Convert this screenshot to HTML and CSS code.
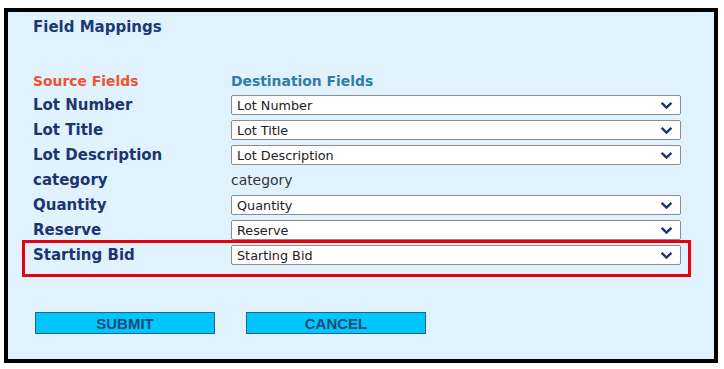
FILE: index.html
```html
<!DOCTYPE html>
<html lang="en">
<head>
  <meta charset="UTF-8">
  <meta name="viewport" content="width=device-width, initial-scale=1.0">
  <title>Field Mappings</title>
  <link rel="stylesheet" href="styles.css">
</head>
<body>
  <div id="panel">
    <h1>Field Mappings</h1>

    <div class="row head">
      <span class="source">Source Fields</span>
      <span class="dest">Destination Fields</span>
    </div>

    <div id="mappings">
      <div class="row">
        <label>Lot Number</label>
        <div class="pick"><span>Lot Number</span><svg viewBox="0 0 12 8"><path d="M1.5 1.5 6 6l4.5-4.5"/></svg></div>
      </div>
      <div class="row">
        <label>Lot Title</label>
        <div class="pick"><span>Lot Title</span><svg viewBox="0 0 12 8"><path d="M1.5 1.5 6 6l4.5-4.5"/></svg></div>
      </div>
      <div class="row">
        <label>Lot Description</label>
        <div class="pick"><span>Lot Description</span><svg viewBox="0 0 12 8"><path d="M1.5 1.5 6 6l4.5-4.5"/></svg></div>
      </div>
      <div class="row">
        <label>category</label>
        <div class="fixed">category</div>
      </div>
      <div class="row">
        <label>Quantity</label>
        <div class="pick"><span>Quantity</span><svg viewBox="0 0 12 8"><path d="M1.5 1.5 6 6l4.5-4.5"/></svg></div>
      </div>
      <div class="row">
        <label>Reserve</label>
        <div class="pick"><span>Reserve</span><svg viewBox="0 0 12 8"><path d="M1.5 1.5 6 6l4.5-4.5"/></svg></div>
      </div>
      <div class="row highlight">
        <label>Starting Bid</label>
        <div class="pick"><span>Starting Bid</span><svg viewBox="0 0 12 8"><path d="M1.5 1.5 6 6l4.5-4.5"/></svg></div>
      </div>
    </div>

    <div id="actions">
      <button type="button">SUBMIT</button>
      <button type="button">CANCEL</button>
    </div>
  </div>
</body>
</html>
```

FILE: styles.css
```css
*{
  margin: 0;
  padding: 0;
  box-sizing: border-box;
}
body {
  font-family: "DejaVu Sans", Verdana, sans-serif;
  background: #ffffff;
}

#panel {
  width: 714px;
  height: 355px;
  margin: 8px 0 0 4px;
  border: 4px solid #000;
  background-color: #dff2fd;
  padding: 6px 33px 0 25px;
}

h1 {
  font-size: 15px;
  font-weight: bold;
  color: #1e3874;
  line-height: 18px;
}

.row {
  display: flex;
  align-items: center;
}

.row label,
.row .source {
  width: 198px;
  flex: none;
}

.head {
  margin-top: 35px;
  height: 20px;
  font-size: 13.9px;
  font-weight: bold;
}
.source {
  color: #f0532e;
}
.dest {
  color: #2f7ca6;
}

#mappings {
  display: flex;
  flex-direction: column;
  gap: 5px;
  margin-top: 4px;
}

.row label {
  font-size: 15px;
  font-weight: bold;
  color: #1d3470;
}

.pick {
  flex: 1;
  height: 20px;
  background: #fff;
  border: 1px solid #8d8d8d;
  border-radius: 2px;
  display: flex;
  align-items: center;
  justify-content: space-between;
  padding: 0 7px 0 5px;
  font-size: 12.8px;
  color: #222;
}
.pick svg {
  width: 13px;
  height: 9px;
  fill: none;
  stroke: #1d3470;
  stroke-width: 2.2;
}

.fixed {
  font-size: 13.9px;
  color: #333;
  height: 20px;
  line-height: 20px;
}

.highlight {
  border: 3px solid #e8000c;
  margin: -5px -10px 0 -11px;
  padding: 2px 7px 9px 8px;
  align-items: flex-start;
}
.highlight label {
  line-height: 20px;
}

#actions {
  margin-top: 35px;
  padding-left: 2px;
  display: flex;
  gap: 31px;
}
#actions button {
  width: 180px;
  height: 22px;
  background-color: #00c6fb;
  border: 1px solid #2d5e8e;
  font-family: "Liberation Sans", Arial, sans-serif;
  font-weight: bold;
  font-size: 15px;
  color: #1b4b78;
}
```
